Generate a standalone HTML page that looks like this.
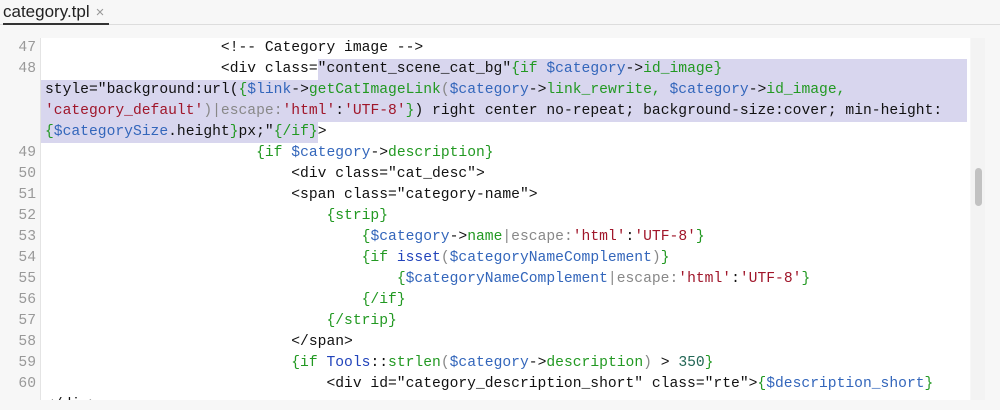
<!DOCTYPE html>
<html><head><style>
body{margin:0;width:1000px;height:410px;background:#f7f7f7;overflow:hidden;position:relative;font-family:"Liberation Sans",sans-serif}
.tab{position:absolute;left:3px;top:2px;font-size:17px;color:#222}
.tab .x{color:#999;font-size:15px;margin-left:6px}
.ul{position:absolute;left:3px;top:23px;width:106px;height:2px;background:#333}
.hl{position:absolute;left:0;top:24px;width:1000px;height:1px;background:#ddd}
.ed{position:absolute;left:3px;top:38px;width:967px;height:362px;background:#fff;overflow:hidden}
.gut{position:absolute;left:0;top:0;width:37px;height:362px;background:#f7f7f7;border-right:1px solid #e4e4e4}
.sel{position:absolute;background:#d8d6ee}
pre{margin:0;position:absolute;left:0;top:0;font-family:"Liberation Mono",monospace;font-size:14.67px;line-height:21px;color:#111}
.n{position:absolute;left:0;width:33px;text-align:right;color:#999;font-family:"Liberation Mono",monospace;font-size:14.67px;line-height:21px}
.g{color:#229922}.b{color:#3366bb}.r{color:#a0162a}.s{color:#888}.k{color:#2244bb}.t{color:#226655}
.sb{position:absolute;left:971px;top:38px;width:14px;height:362px;background:#f3f3f3}
.th{position:absolute;left:975px;top:168px;width:7px;height:38px;border-radius:4px;background:#c2c2c2}
</style></head><body>
<div class="tab">category.tpl<span class="x">×</span></div>
<div class="hl"></div><div class="ul"></div>
<div class="ed">
<div class="gut"></div>
<div class="sel" style="left:315px;top:21px;width:649px;height:21px"></div>
<div class="sel" style="left:38px;top:42px;width:926px;height:42px"></div>
<div class="sel" style="left:38px;top:84px;width:277px;height:21px"></div>
<div class="n" style="top:0">47</div><div class="n" style="top:21px">48</div>
<div class="n" style="top:105px">49</div><div class="n" style="top:126px">50</div><div class="n" style="top:147px">51</div><div class="n" style="top:168px">52</div><div class="n" style="top:189px">53</div><div class="n" style="top:210px">54</div><div class="n" style="top:231px">55</div><div class="n" style="top:252px">56</div><div class="n" style="top:273px">57</div><div class="n" style="top:294px">58</div><div class="n" style="top:315px">59</div><div class="n" style="top:336px">60</div>
<pre style="left:42px">                    &lt;!-- Category image --&gt;
                    &lt;div class="content_scene_cat_bg"<span class="g">{if </span><span class="b">$category</span>-&gt;<span class="g">id_image}</span>
style="background:url(<span class="g">{</span><span class="b">$link</span>-&gt;<span class="g">getCatImageLink</span><span class="s">(</span><span class="b">$category</span>-&gt;<span class="g">link_rewrite, </span><span class="b">$category</span>-&gt;<span class="g">id_image,</span>
<span class="r">'category_default'</span><span class="s">)|escape:</span><span class="r">'html'</span>:<span class="r">'UTF-8'</span><span class="g">}</span>) right center no-repeat; background-size:cover; min-height:
<span class="g">{</span><span class="b">$categorySize</span>.height<span class="g">}</span>px;"<span class="g">{/if}</span>&gt;
                        <span class="g">{if </span><span class="b">$category</span>-&gt;<span class="g">description}</span>
                            &lt;div class="cat_desc"&gt;
                            &lt;span class="category-name"&gt;
                                <span class="g">{strip}</span>
                                    <span class="g">{</span><span class="b">$category</span>-&gt;<span class="g">name</span><span class="s">|escape:</span><span class="r">'html'</span>:<span class="r">'UTF-8'</span><span class="g">}</span>
                                    <span class="g">{if </span><span class="k">isset</span><span class="s">(</span><span class="b">$categoryNameComplement</span><span class="s">)</span><span class="g">}</span>
                                        <span class="g">{</span><span class="b">$categoryNameComplement</span><span class="s">|escape:</span><span class="r">'html'</span>:<span class="r">'UTF-8'</span><span class="g">}</span>
                                    <span class="g">{/if}</span>
                                <span class="g">{/strip}</span>
                            &lt;/span&gt;
                            <span class="g">{if </span><span class="k">Tools</span>::<span class="g">strlen</span><span class="s">(</span><span class="b">$category</span>-&gt;<span class="g">description</span><span class="s">)</span> &gt; <span class="t">350</span><span class="g">}</span>
                                &lt;div id="category_description_short" class="rte"&gt;<span class="g">{</span><span class="b">$description_short</span><span class="g">}</span>
&lt;/div&gt;</pre>
</div>
<div class="sb"></div><div class="th"></div>
</body></html>
